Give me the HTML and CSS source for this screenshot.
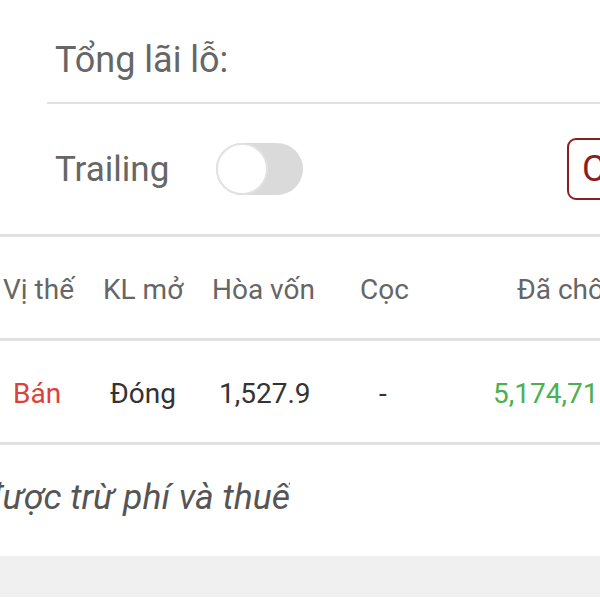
FILE: index.html
```html
<!DOCTYPE html>
<html lang="vi">
  <head>
    <meta charset="UTF-8" />
    <meta name="viewport" content="width=device-width, initial-scale=1" />
    <title>Lãi lỗ</title>
    <link rel="stylesheet" href="styles.css">
  </head>
  <body>
    <section class="summary">
      <div class="total-row">Tổng lãi lỗ:</div>
      <div class="trailing-row">
        <span class="trailing-label">Trailing</span>
        <span class="switch" role="switch" aria-checked="false"><span class="knob"></span></span>
        <button class="close-btn">Chốt</button>
      </div>
    </section>
    <section class="positions">
      <div class="pos-row head">
        <span class="c-side">Vị thế</span>
        <span class="c-vol">KL mở</span>
        <span class="c-be">Hòa vốn</span>
        <span class="c-dep">Cọc</span>
        <span class="c-pnl">Đã chốt</span>
      </div>
      <div class="pos-row">
        <span class="c-side sell">Bán</span>
        <span class="c-vol">Đóng</span>
        <span class="c-be">1,527.9</span>
        <span class="c-dep">-</span>
        <span class="c-pnl profit">5,174,715</span>
      </div>
    </section>
    <p class="note">*Lãi lỗ đã chốt chưa được trừ phí và thuế</p>
    <div class="bottom-band"></div>
  </body>
</html>
```

FILE: styles.css
```css
body {
  font-family: Roboto, 'Noto Sans', sans-serif;
  margin: 0;
  background: #fff;
  color: #666;
  width: 600px;
  height: 600px;
  overflow: hidden;
}

.summary {
  padding-left: 47px;
}

.total-row {
  height: 104px;
  padding-left: 8px;
  font-size: 36px;
  line-height: 120px;
  border-bottom: 2px solid #e0e0e0;
  box-sizing: border-box;
  overflow: hidden;
}

.trailing-row {
  height: 130px;
  display: flex;
  align-items: center;
  padding-left: 8px;
  white-space: nowrap;
}

.trailing-row > * {
  flex-shrink: 0;
}

.trailing-label {
  font-size: 35px;
  width: 161px;
}

.switch {
  position: relative;
  display: inline-block;
  width: 87px;
  height: 52px;
  border-radius: 26px;
  background: #dadada;
}

.knob {
  position: absolute;
  left: 0;
  top: 0;
  width: 52px;
  height: 52px;
  border-radius: 50%;
  background: #fff;
  border: 2px solid #e2e2e2;
  box-sizing: border-box;
}

.close-btn {
  margin-left: 264px;
  height: 62px;
  padding: 0 13px;
  border: 2px solid #8a1f1f;
  border-radius: 9px;
  background: #fff;
  color: #8a1f1f;
  font-family: Roboto, sans-serif;
  font-size: 36px;
}

.positions {
  border-top: 3px solid #e0e0e0;
}

.pos-row {
  display: flex;
  align-items: center;
  height: 104px;
  padding-top: 4px;
  border-bottom: 3px solid #e0e0e0;
  box-sizing: border-box;
  font-size: 28px;
  color: #333;
  white-space: nowrap;
}

.pos-row.head {
  color: #666;
}

.pos-row span {
  flex-shrink: 0;
}

/* header columns */
.c-side {
  width: 100px;
  padding-left: 3px;
}

.c-vol {
  width: 109px;
}

.c-be {
  width: 148px;
}

.c-dep {
  width: 157px;
}

/* data columns */
.pos-row .sell {
  color: #d9433a;
  padding-left: 13px;
  width: 97px;
}

.pos-row:not(.head) .c-be {
  width: 160px;
}

.pos-row:not(.head) .c-dep {
  width: 114px;
}

.profit {
  color: #4caf50;
}

.note {
  margin: 0;
  width: 290px;
  height: 110px;
  padding-bottom: 6px;
  box-sizing: border-box;
  display: flex;
  align-items: center;
  justify-content: flex-end;
  overflow: hidden;
  font-size: 35.5px;
  font-style: italic;
  color: #555;
  white-space: nowrap;
}

.bottom-band {
  height: 41px;
  margin-top: 1px;
  background: #f0f0f0;
}
```
